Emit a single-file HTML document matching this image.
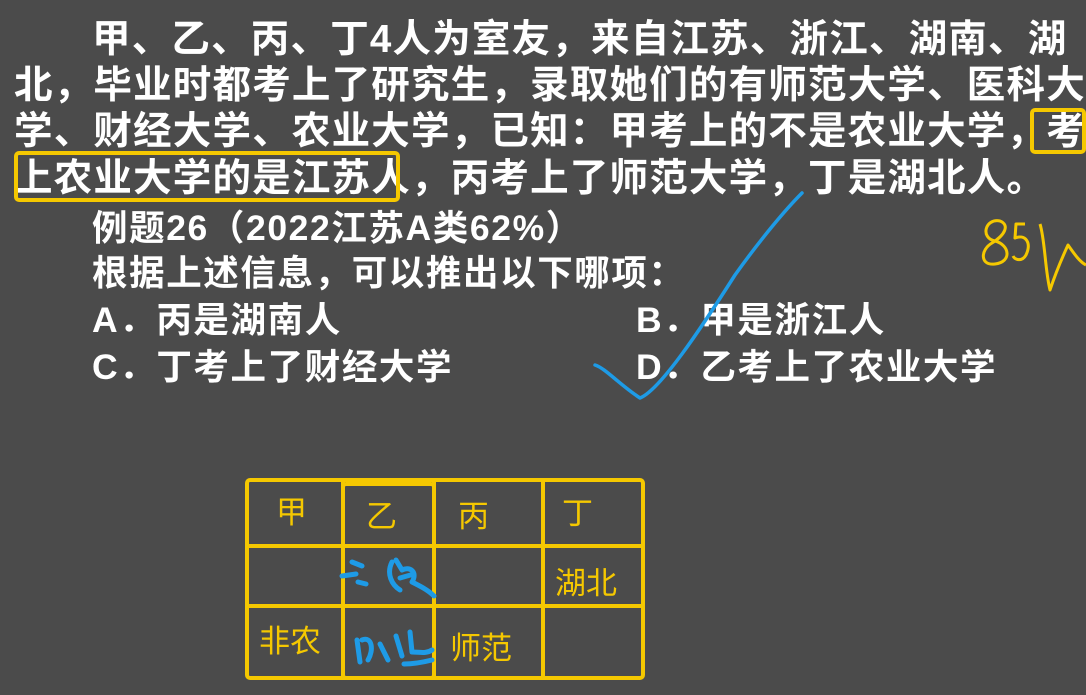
<!DOCTYPE html>
<html><head><meta charset="utf-8"><style>
body{margin:0;width:1086px;height:695px;background:#4b4b4b;overflow:hidden;position:relative;font-family:"Liberation Sans","Noto Sans CJK SC",sans-serif;}
.l{position:absolute;color:#fff;font-weight:bold;font-size:38.5px;letter-spacing:1.2px;white-space:nowrap;line-height:46px;}
.s{font-size:35.5px;letter-spacing:1.6px;}
.t{position:absolute;color:#f5c800;font-size:31px;line-height:1;}
svg{position:absolute;left:0;top:0}
</style></head><body>
<div class="l" style="left:92px;top:17px">甲、乙、丙、丁4人为室友，来自江苏、浙江、湖南、湖</div>
<div class="l" style="left:14px;top:63px">北，毕业时都考上了研究生，录取她们的有师范大学、医科大</div>
<div class="l" style="left:14px;top:109px">学、财经大学、农业大学，已知：甲考上的不是农业大学，考</div>
<div class="l" style="left:14px;top:156px">上农业大学的是江苏人，丙考上了师范大学，丁是湖北人。</div>
<div class="l s" style="left:92px;top:205px">例题26（2022江苏A类62%）</div>
<div class="l s" style="left:92px;top:250px">根据上述信息，可以推出以下哪项：</div>
<div class="l s" style="left:92px;top:297px">A．丙是湖南人</div>
<div class="l s" style="left:636px;top:297px">B．甲是浙江人</div>
<div class="l s" style="left:92px;top:344px">C．丁考上了财经大学</div>
<div class="l s" style="left:636px;top:344px">D．乙考上了农业大学</div>
<div class="t" style="left:276px;top:497px">甲</div>
<div class="t" style="left:366px;top:501px">乙</div>
<div class="t" style="left:458px;top:501px">丙</div>
<div class="t" style="left:562px;top:498px">丁</div>
<div class="t" style="left:555px;top:568px">湖北</div>
<div class="t" style="left:259px;top:626px">非农</div>
<div class="t" style="left:450px;top:633px">师范</div>
<svg width="1086" height="695" viewBox="0 0 1086 695">
<g fill="none" stroke="#f5c800" stroke-width="4" stroke-linejoin="round">
<rect x="1032" y="110" width="52" height="42" rx="3"/>
<rect x="16" y="153" width="382" height="47" rx="3"/>
<rect x="247" y="480" width="396" height="198" rx="3"/>
<line x1="343" y1="480" x2="343" y2="678"/>
<line x1="434" y1="478" x2="434" y2="678"/>
<line x1="543" y1="480" x2="543" y2="678"/>
<line x1="247" y1="546" x2="643" y2="546"/>
<line x1="247" y1="606" x2="643" y2="606"/>
<rect x="343" y="484" width="91" height="194" rx="3"/>
<path d="M1000 221 C985 218 980 238 995 241 C1010 245 1012 262 995 264 C980 266 980 250 992 243 C1005 235 1010 225 1000 221Z" stroke-width="3"/>
<path d="M1025 224 L1016 224 L1015 238 C1025 234 1032 242 1026 255 C1022 262 1015 260 1013 256" stroke-width="3"/>
<path d="M1040 224 C1045 240 1045 270 1050 290 C1055 275 1062 258 1068 245 C1075 255 1080 262 1086 265" stroke-width="3"/>
</g>
<g fill="none" stroke="#1e9be6" stroke-width="5" stroke-linecap="round" stroke-linejoin="round">
<path d="M595 365 C605 368 620 385 640 398 C660 390 700 330 735 275 C760 240 785 210 802 193" stroke-width="3.5"/>
<path d="M342 576 L356 574 M352 562 L362 566 M358 582 L366 584 M392 562 C386 574 392 585 400 590 M396 560 L402 570 C410 566 418 572 412 582 C420 586 428 590 434 596 M400 578 L414 574"/>
<path d="M357 640 L360 662 M362 640 C372 636 374 650 368 660 M380 644 L388 660 M396 636 L402 656 M410 632 L412 652 C420 652 426 654 432 650 M404 664 C414 664 424 662 432 660"/>
</g>
</svg>
</body></html>
